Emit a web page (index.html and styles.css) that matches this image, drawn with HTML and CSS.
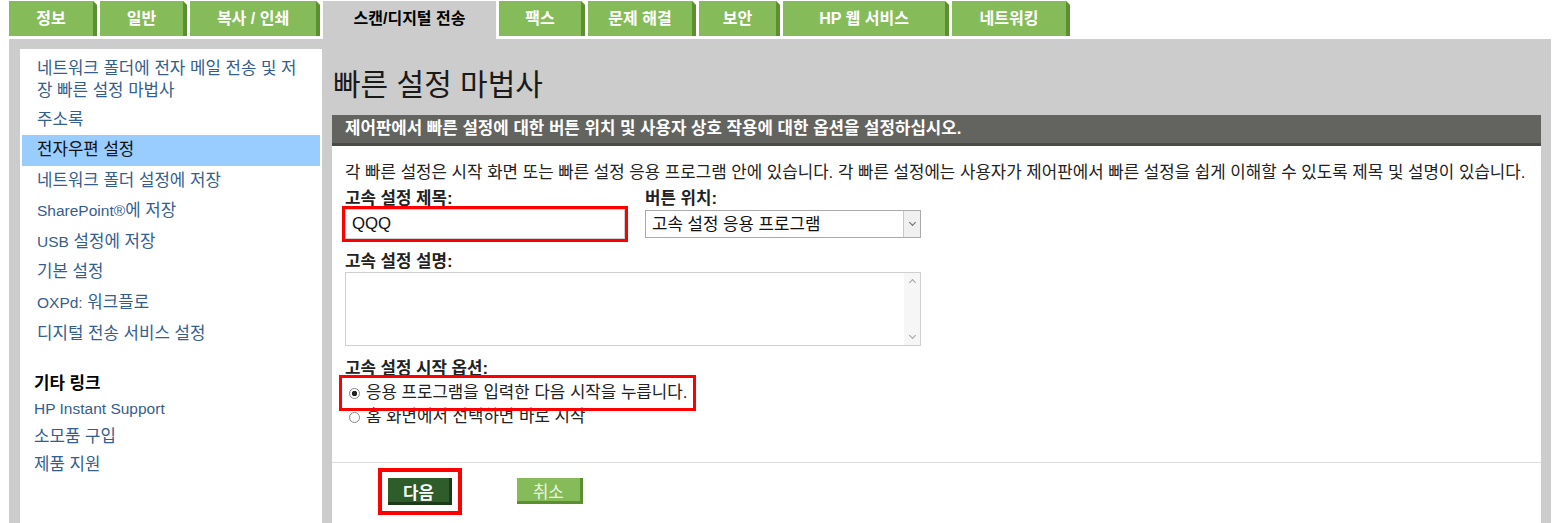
FILE: index.html
```html
<!DOCTYPE html>
<html lang="ko">
<head>
    <meta charset="UTF-8">
    <meta name="viewport" content="width=device-width, initial-scale=1.0">
    <title>빠른 설정 마법사</title>
    <link rel="stylesheet" href="styles.css">
</head>
<body>
    <!-- Top tabs -->
    <nav class="tabs">
        <a class="tab" href="#">정보</a>
        <a class="tab" href="#">일반</a>
        <a class="tab" href="#">복사 / 인쇄</a>
        <a class="tab active" href="#">스캔/디지털 전송</a>
        <a class="tab" href="#">팩스</a>
        <a class="tab" href="#">문제 해결</a>
        <a class="tab" href="#">보안</a>
        <a class="tab" href="#">HP 웹 서비스</a>
        <a class="tab" href="#">네트워킹</a>
    </nav>

    <div class="frame">
        <aside class="sidebar">
            <ul class="side-menu">
                <li><a href="#">네트워크 폴더에 전자 메일 전송 및 저장 빠른 설정 마법사</a></li>
                <li><a href="#">주소록</a></li>
                <li class="selected"><a href="#">전자우편 설정</a></li>
                <li><a href="#">네트워크 폴더 설정에 저장</a></li>
                <li><a href="#"><span class="en">SharePoint®</span>에 저장</a></li>
                <li><a href="#"><span class="en">USB</span> 설정에 저장</a></li>
                <li><a href="#">기본 설정</a></li>
                <li><a href="#"><span class="en">OXPd:</span> 워크플로</a></li>
                <li><a href="#">디지털 전송 서비스 설정</a></li>
            </ul>

            <div class="other-links">
                <h4>기타 링크</h4>
                <a href="#" class="en">HP Instant Support</a>
                <a href="#">소모품 구입</a>
                <a href="#">제품 지원</a>
            </div>
        </aside>

        <main class="main">
            <h1>빠른 설정 마법사</h1>

            <div class="panel">
                <div class="panel-title">제어판에서 빠른 설정에 대한 버튼 위치 및 사용자 상호 작용에 대한 옵션을 설정하십시오.</div>

                <div class="panel-body">
                    <p class="intro">각 빠른 설정은 시작 화면 또는 빠른 설정 응용 프로그램 안에 있습니다. 각 빠른 설정에는 사용자가 제어판에서 빠른 설정을 쉽게 이해할 수 있도록 제목 및 설명이 있습니다.</p>

                    <div class="field-row">
                        <div class="field">
                            <label for="qsTitle">고속 설정 제목:</label>
                            <input type="text" id="qsTitle" class="text-input marked" value="QQQ">
                        </div>
                        <div class="field">
                            <label for="qsPosition">버튼 위치:</label>
                            <div class="select-wrap">
                                <select id="qsPosition">
                                    <option>고속 설정 응용 프로그램</option>
                                </select>
                            </div>
                        </div>
                    </div>

                    <label for="qsDesc" class="field-label">고속 설정 설명:</label>
                    <div class="textarea-wrap">
                        <textarea id="qsDesc"></textarea>
                    </div>

                    <div class="field-label">고속 설정 시작 옵션:</div>
                    <label class="radio-row marked"><input type="radio" name="startOpt" checked> 응용 프로그램을 입력한 다음 시작을 누릅니다.</label>
                    <label class="radio-row"><input type="radio" name="startOpt"> 홈 화면에서 선택하면 바로 시작</label>
                </div>

                <div class="panel-foot">
                    <button class="btn btn-next marked-btn">다음</button>
                    <button class="btn btn-cancel">취소</button>
                </div>
            </div>
        </main>
    </div>
</body>
</html>
```
FILE: styles.css
```css
/* General */
body {
    margin: 0;
    font-family: "Liberation Sans", "Noto Sans CJK KR", sans-serif;
    font-size: 16.8px;
    color: #222;
    background: #fff;
    overflow: hidden;
}

a {
    text-decoration: none;
}

.en {
    font-size: 15.5px;
}

/* Tabs */
.tabs {
    display: grid;
    grid-template-columns: 88px 87px 130px 173px 86px 108px 81px 166px 118px;
    column-gap: 3px;
    align-items: start;
    margin-left: 9px;
    padding-top: 1px;
    height: 38px;
}

.tab {
    display: block;
    height: 35px;
    line-height: 35px;
    text-align: center;
    background: #86bb5a;
    border-right: 4px solid #5a9030;
    color: #fff;
    font-size: 16px;
    font-weight: bold;
    clip-path: polygon(0 0, calc(100% - 4px) 0, 100% 4px, 100% 100%, 0 100%);
}

.tab.active {
    height: 38px;
    background: #cccccc;
    border-right: none;
    color: #000;
    clip-path: none;
}

/* Grey frame */
.frame {
    display: flex;
    gap: 10px;
    width: 1542px;
    height: calc(100vh - 39px);
    margin-left: 9px;
    padding: 10px 10px 0 11px;
    box-sizing: border-box;
    background: #cccccc;
}

/* Sidebar */
.sidebar {
    width: 302px;
    flex-shrink: 0;
    background: #fff;
    padding-top: 5px;
}

.side-menu {
    list-style: none;
    margin: 0 2px;
    padding: 0;
}

.side-menu li a {
    display: block;
    padding: 4px 18px 4.6px 15px;
    line-height: 22px;
    color: #345e8e;
}

.side-menu li:first-child a {
    padding-bottom: 2.5px;
}

.side-menu li.selected {
    background: #99ccff;
}

.side-menu li.selected a {
    color: #111;
}

.other-links {
    margin-top: 25px;
    padding-left: 14px;
}

.other-links h4 {
    margin: 0 0 1px;
    line-height: 20px;
    font-size: 16.8px;
    color: #000;
}

.other-links a {
    display: block;
    line-height: 22px;
    padding: 3px 0;
    color: #345e8e;
}

/* Main column */
.main {
    flex: 1;
    display: flex;
    flex-direction: column;
}

.main h1 {
    margin: 19px 0 13px 1px;
    font-size: 30px;
    font-weight: normal;
    line-height: 34px;
    color: #1a1a1a;
}

.panel {
    flex: 1;
    display: flex;
    flex-direction: column;
    background: #fff;
}

.panel-title {
    background: #63645f;
    border-bottom: 3px solid #4a4b47;
    color: #fff;
    font-weight: bold;
    line-height: 28px;
    padding: 0 13px;
}

.panel-body {
    padding: 17px 13px 33px;
}

.intro {
    margin: 0;
    line-height: 20px;
}

.field-row {
    display: grid;
    grid-template-columns: 280px 276px;
    column-gap: 20px;
    margin-top: 7px;
}

.field label,
.field-label {
    display: block;
    font-weight: bold;
    line-height: 18px;
}

.field-label {
    margin-top: 14px;
}

.text-input {
    display: block;
    box-sizing: border-box;
    width: 280px;
    height: 30px;
    margin-top: 1px;
    padding: 0 6px;
    border: 1px solid #cfcfcf;
    font-family: inherit;
    font-size: 16.8px;
    color: #111;
}

/* Red annotation boxes */
.marked {
    outline: 3px solid #f00;
    outline-offset: 0;
}

.marked-btn {
    outline: 4px solid #f00;
    outline-offset: 6px;
}

.select-wrap {
    position: relative;
    margin-top: 2px;
}

.select-wrap select {
    display: block;
    appearance: none;
    box-sizing: border-box;
    width: 276px;
    height: 28px;
    padding: 0 24px 0 6px;
    border: 1px solid #aaa;
    background: linear-gradient(to left, #f0f0f0 16px, #c8c8c8 16px, #c8c8c8 17px, #fff 17px);
    font-family: inherit;
    font-size: 16.8px;
    color: #111;
}

.select-wrap::after {
    content: "";
    position: absolute;
    right: 6px;
    top: 10px;
    width: 4px;
    height: 4px;
    border-right: 1px solid #666;
    border-bottom: 1px solid #666;
    transform: rotate(45deg);
}

/* Description box with its scrollbar */
.textarea-wrap {
    position: relative;
    width: 576px;
    margin-top: 1px;
}

.textarea-wrap textarea {
    display: block;
    box-sizing: border-box;
    width: 576px;
    height: 74px;
    border: 1px solid #cfcfcf;
    background: linear-gradient(to left, #f6f6f6 16px, #fff 16px);
    resize: none;
    overflow: hidden;
    font-family: inherit;
}

.textarea-wrap::before,
.textarea-wrap::after {
    content: "";
    position: absolute;
    right: 6px;
    width: 4px;
    height: 4px;
    border-left: 1px solid #a0a0a0;
    border-top: 1px solid #a0a0a0;
}

.textarea-wrap::before {
    top: 8px;
    transform: rotate(45deg);
}

.textarea-wrap::after {
    bottom: 8px;
    transform: rotate(225deg);
}

/* Radio options */
.radio-row {
    display: flex;
    align-items: center;
    width: fit-content;
    height: 24px;
    padding: 0 3px 0 2px;
    line-height: 24px;
}

.radio-row.marked {
    margin-top: 3px;
    outline-offset: 3px;
}

.radio-row input {
    appearance: none;
    width: 11px;
    height: 11px;
    margin: 0 6px 0 2px;
    border: 1px solid #888;
    border-radius: 50%;
    background: #fff;
}

.radio-row input:checked {
    background: radial-gradient(circle, #222 0, #222 2.5px, #fff 3px);
}

/* Footer buttons */
.panel-foot {
    flex: 1;
    display: flex;
    align-items: flex-start;
    gap: 65px;
    border-top: 1px solid #dddddd;
    padding: 15px 0 0 56px;
}

.btn {
    height: 27px;
    padding: 0 18px 0 15px;
    border: none;
    font-family: inherit;
    font-size: 16.8px;
    font-weight: bold;
    cursor: pointer;
}

.btn-next {
    background: #2e5c2a;
    box-shadow: inset -3px -3px 0 #1a3a18;
    color: #fff;
}

.btn-cancel {
    height: 26px;
    padding: 0 19px 0 16px;
    background: #86bb5a;
    box-shadow: inset -3px -3px 0 #5a9030;
    color: #eef6e6;
    font-weight: normal;
}
```
